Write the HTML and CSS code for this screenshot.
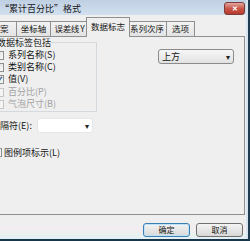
FILE: index.html
```html
<!DOCTYPE html>
<html lang="zh-CN">
<head>
  <meta charset="UTF-8">
  <title>“累计百分比”格式</title>
  <link rel="stylesheet" href="styles.css">
</head>
<body>

<!-- Dialog frame -->
<div class="frame">
  <div class="win">

    <!-- Title bar -->
    <div class="titlebar">
      <span class="title">“累计百分比”格式</span>
      <span class="close">✕</span>
    </div>

    <!-- Tabs -->
    <div class="tabs">
      <div class="tab t1">图案</div>
      <div class="tab t2">坐标轴</div>
      <div class="tab t3">误差线 Y</div>
      <div class="tab t4 active">数据标志</div>
      <div class="tab t5">系列次序</div>
      <div class="tab t6">选项</div>
    </div>

    <!-- Tab panel -->
    <div class="panel">
      <div class="top-row">
        <fieldset class="group">
          <legend>数据标签包括</legend>
          <div class="check-row"><span class="box"></span>系列名称(S)</div>
          <div class="check-row"><span class="box"></span>类别名称(C)</div>
          <div class="check-row"><span class="box checked">✓</span>值(V)</div>
          <div class="check-row off gap"><span class="box"></span>百分比(P)</div>
          <div class="check-row off"><span class="box"></span>气泡尺寸(B)</div>
        </fieldset>
        <div class="combo pos"><span>上方</span><span class="arrow">▾</span></div>
      </div>

      <div class="sep-row">
        <span class="sep-label">分隔符(E):</span>
        <div class="combo blank"><span></span><span class="arrow">▾</span></div>
      </div>

      <div class="legend-row"><span class="box"></span>图例项标示(L)</div>
    </div>

    <!-- Buttons -->
    <div class="footer">
      <button class="btn default">确定</button>
      <button class="btn">取消</button>
    </div>

  </div>
</div>

</body>
</html>
```

FILE: styles.css
```css
/* Colours */
:root {
  --face: #efefef;
  --text: #151515;
  --muted: #a3a3a3;
  --tab-border: #8e8f8f;
  --group-border: #d3d9dd;
}
html, body {
  margin: 0;
  padding: 0;
  background: var(--face);
  font-family: "Noto Sans CJK SC", "Noto Sans", sans-serif;
  font-size: 9px;
  color: var(--text);
}

/* Window frame */
.frame {
  width: 250px;
  height: 241px;
  box-sizing: border-box;
  border-right: 2px solid #1f3b50;
  border-bottom: 2px solid #17364a;
  overflow: hidden;
}
.win {
  height: 100%;
  display: flex;
  flex-direction: column;
  border-right: 2px solid #d6e4ef;
  background: var(--face);
  overflow: hidden;
}

/* Title bar */
.titlebar {
  height: 15px;
  flex: none;
  display: flex;
  align-items: center;
  justify-content: space-between;
  background: linear-gradient(#bfd0e3, #d2e0ee);
}
.title {
  font-size: 9px;
  line-height: 10px;
  margin: 2px 0 0 0;
}
.close {
  width: 19px;
  height: 11px;
  margin: 1px 1px 0 0;
  border: 1px solid #7b3b3b;
  border-radius: 3px;
  background: linear-gradient(#e4a79d, #c9564a 50%, #b83a2e);
  color: #fff;
  font-size: 7px;
  line-height: 11px;
  text-align: center;
  font-weight: bold;
}

/* Tabs */
.tabs {
  height: 21px;
  flex: none;
  display: flex;
  align-items: flex-end;
  margin-left: -17px;
  position: relative;
  z-index: 1;
}
.tab {
  box-sizing: border-box;
  height: 15px;
  border: 1px solid var(--tab-border);
  border-bottom: none;
  margin-right: -1px;
  background: linear-gradient(#f3f3f3, #e3e3e3);
  font-size: 8.5px;
  line-height: 13px;
  text-align: center;
  white-space: nowrap;
  overflow: hidden;
}
.t1 { width: 34px; }
.t2 { width: 35px; }
.t3 { width: 39px; letter-spacing: -0.4px; }
.t5 { width: 40px; }
.t6 { width: 29px; }
.tab.active {
  width: 44px;
  height: 20px;
  margin: 0 -3px -1px -2px;
  padding-bottom: 1px;
  background: var(--face);
  line-height: 16px;
  position: relative;
  z-index: 2;
}

/* Panel */
.panel {
  flex: none;
  height: 179px;
  box-sizing: border-box;
  margin-left: -5px;
  margin-right: 1px;
  border: 1px solid var(--tab-border);
  background: var(--face);
  display: flex;
  flex-direction: column;
}
.top-row {
  display: flex;
  align-items: flex-start;
}

/* Group box */
.group {
  box-sizing: border-box;
  width: 109px;
  margin: 0 0 0 -8px;
  padding: 1px 0 1px 6px;
  border: 1px solid var(--group-border);
}
.group legend {
  padding: 0;
  margin-left: 2px;
  line-height: 11px;
  font-size: 9px;
}
.check-row {
  height: 12px;
  display: flex;
  align-items: center;
  white-space: nowrap;
  line-height: 12px;
}
.check-row.gap { margin-top: 1px; }
.check-row.off { color: var(--muted); }
.box {
  width: 9px;
  height: 9px;
  flex: none;
  box-sizing: border-box;
  border: 1px solid #8f8f8f;
  background: linear-gradient(135deg, #dcdcdc, #fafafa);
  margin-right: 4px;
  font-size: 8px;
  line-height: 7px;
  text-align: center;
  color: #26488a;
  font-weight: bold;
}
.off .box { border-color: #c6c6c6; background: #f4f4f4; }

/* Combo boxes */
.combo {
  box-sizing: border-box;
  height: 15px;
  display: flex;
  align-items: center;
  justify-content: space-between;
  border: 1px solid #8b8b8b;
  border-radius: 3px;
  padding: 0 3px;
  font-size: 9px;
}
.combo .arrow {
  font-size: 8px;
  color: #222;
}
.combo.pos {
  width: 76px;
  margin: 12px 10px 0 auto;
  background: linear-gradient(#f6f6f6, #e2e2e2);
}
.combo.blank {
  width: 56px;
  border-color: #e6e6e6;
  background: #fff;
}

/* Separator row */
.sep-row {
  display: flex;
  align-items: center;
  margin: 6px 0 0 -5px;
}
.sep-label {
  width: 46px;
  white-space: nowrap;
}

/* Legend key row */
.legend-row {
  display: flex;
  align-items: center;
  height: 12px;
  margin: 13px 0 0 -3px;
  white-space: nowrap;
}
.legend-row .box { margin-right: 2px; }

/* Footer buttons */
.footer {
  flex: 1;
  display: flex;
  justify-content: flex-end;
  align-items: flex-start;
  gap: 6px;
  padding: 8px 3px 0 0;
  background: linear-gradient(#efefef 40%, #f3ecf2 60%, #eaf2ee 80%, #e3eff7);
}
.btn {
  width: 47px;
  height: 14px;
  padding: 0;
  border: 1px solid #707070;
  border-radius: 3px;
  background: linear-gradient(#f4f4f4, #e6e6e6 50%, #d8d8d8);
  font-family: inherit;
  font-size: 8px;
  line-height: 12px;
  color: var(--text);
}
.btn.default {
  border-color: #3c7fb1;
  box-shadow: inset 0 0 0 1px #bfe3f6;
}
```
